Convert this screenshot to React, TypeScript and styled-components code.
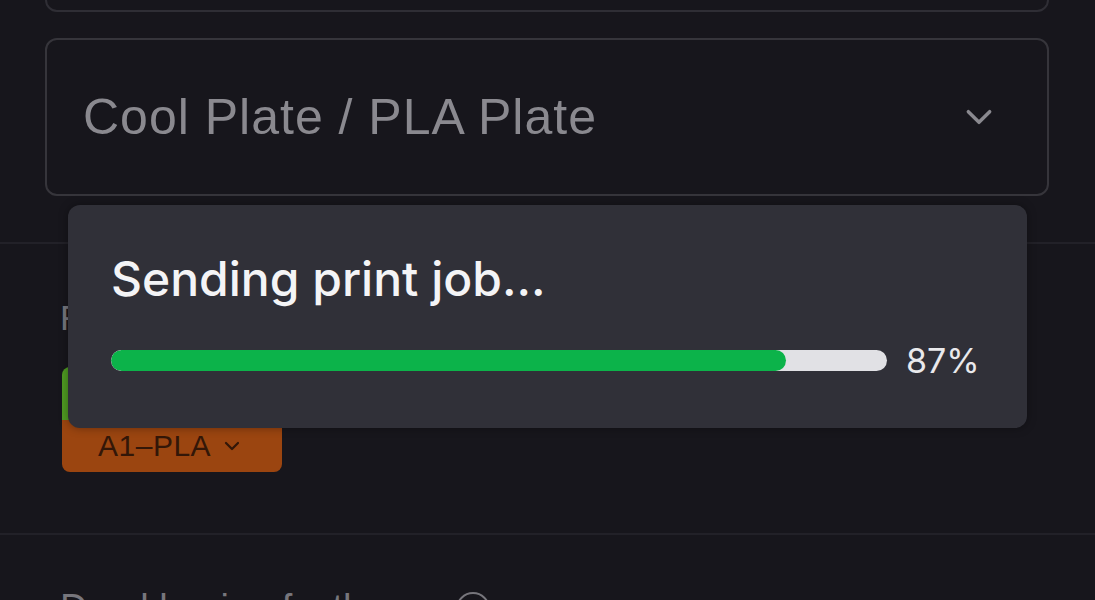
import React from "react";
import styled, { createGlobalStyle } from "styled-components";

const Global = createGlobalStyle`
  html, body { margin: 0; padding: 0; background: #17161c; }
  body { width: 1095px; height: 600px; overflow: hidden; font-family: "Liberation Sans", Arial, sans-serif; }
  #root { width: 1095px; height: 600px; }
`;

const Page = styled.div`
  position: relative;
  width: 1095px;
  height: 600px;
  overflow: hidden;
  background: #17161c;
  display: flex;
  flex-direction: column;
`;

const Section = styled.section<{ $pt: number; $pb: number; $border?: boolean }>`
  padding: ${(p) => p.$pt}px 46px ${(p) => p.$pb}px 45px;
  border-bottom: ${(p) => (p.$border ? "2px solid #222128" : "none")};
  display: flex;
  flex-direction: column;
  flex-shrink: 0;
`;

const TopCard = styled.div`
  height: 60px;
  margin-top: -48px;
  border: 2px solid #2f2e35;
  border-radius: 12px;
  box-sizing: border-box;
`;

const Select = styled.div`
  margin-top: 26px;
  height: 158px;
  box-sizing: border-box;
  border: 2px solid #36353b;
  border-radius: 12px;
  display: flex;
  align-items: center;
  justify-content: space-between;
  padding: 0 52px 0 36px;
`;

const SelectText = styled.span`
  font-family: "Liberation Sans", Arial, sans-serif;
  font-size: 50px;
  color: #8a898f;
  letter-spacing: 1px;
`;

const Label = styled.div<{ $size: number }>`
  font-family: "Liberation Sans", Arial, sans-serif;
  font-size: ${(p) => p.$size}px;
  color: #77767c;
  padding-left: 15px;
  display: flex;
  align-items: center;
`;

const Swatch = styled.div`
  margin: 29px 0 0 17px;
  width: 220px;
  border-radius: 8px;
  overflow: hidden;
  display: flex;
  flex-direction: column;
`;

const SwatchColor = styled.div`
  height: 53px;
  background: #4f9a22;
`;

const SwatchTag = styled.div`
  height: 52px;
  background: #9b4510;
  display: flex;
  align-items: center;
  gap: 12px;
  padding-left: 36px;
  font-family: "Liberation Sans", Arial, sans-serif;
  font-size: 30px;
  letter-spacing: 0.5px;
  color: #331708;
`;

const HelpIcon = styled.span`
  display: inline-flex;
  width: 30px;
  height: 30px;
  border: 2px solid #77767c;
  border-radius: 50%;
  margin-left: 20px;
`;

const Dialog = styled.div`
  position: absolute;
  left: 68px;
  top: 205px;
  width: 959px;
  height: 223px;
  box-sizing: border-box;
  background: #303038;
  border-radius: 12px;
  box-shadow: 0 0 10px rgba(0, 0, 0, 0.35);
  padding: 46px 49px 0 43px;
  display: flex;
  flex-direction: column;
`;

const DialogTitle = styled.div`
  font-family: Inter, "Noto Sans", sans-serif;
  font-size: 48px;
  font-weight: 500;
  color: #f4f4f6;
  line-height: 56px;
`;

const ProgressRow = styled.div`
  margin-top: 33px;
  display: flex;
  align-items: center;
  gap: 19px;
`;

const Track = styled.div`
  flex: 1;
  height: 21px;
  border-radius: 11px;
  background: #e1e1e5;
  overflow: hidden;
`;

const Fill = styled.div`
  height: 100%;
  border-radius: 11px;
  background: #0cb34a;
`;

const Percent = styled.span`
  font-family: Inter, "Noto Sans", sans-serif;
  font-size: 34px;
  color: #e9e9ec;
  width: 72px;
`;

const Chevron = ({ size, color, sw }: { size: number; color: string; sw: number }) => (
  <svg width={size} height={size} viewBox="0 0 24 24" fill="none">
    <path d="M4 8l8 8 8-8" stroke={color} strokeWidth={sw} strokeLinecap="round" strokeLinejoin="round" />
  </svg>
);

export default function App() {
  const progress = 87;
  return (
    <Page>
      <Global />
      <Section $pt={0} $pb={46} $border>
        <TopCard />
        <Select>
          <SelectText>Cool Plate / PLA Plate</SelectText>
          <Chevron size={32} color="#8a898f" sw={2.6} />
        </Select>
      </Section>
      <Section $pt={54} $pb={61} $border>
        <Label $size={35}>Filament</Label>
        <Swatch>
          <SwatchColor />
          <SwatchTag>
            A1–PLA
            <Chevron size={18} color="#331708" sw={3} />
          </SwatchTag>
        </Swatch>
      </Section>
      <Section $pt={52} $pb={0}>
        <Label $size={38}>
          Druckkopien festlegen
          <HelpIcon />
        </Label>
      </Section>
      <Dialog>
        <DialogTitle>Sending print job...</DialogTitle>
        <ProgressRow>
          <Track>
            <Fill style={{ width: `${progress}%` }} />
          </Track>
          <Percent>{progress}%</Percent>
        </ProgressRow>
      </Dialog>
    </Page>
  );
}
